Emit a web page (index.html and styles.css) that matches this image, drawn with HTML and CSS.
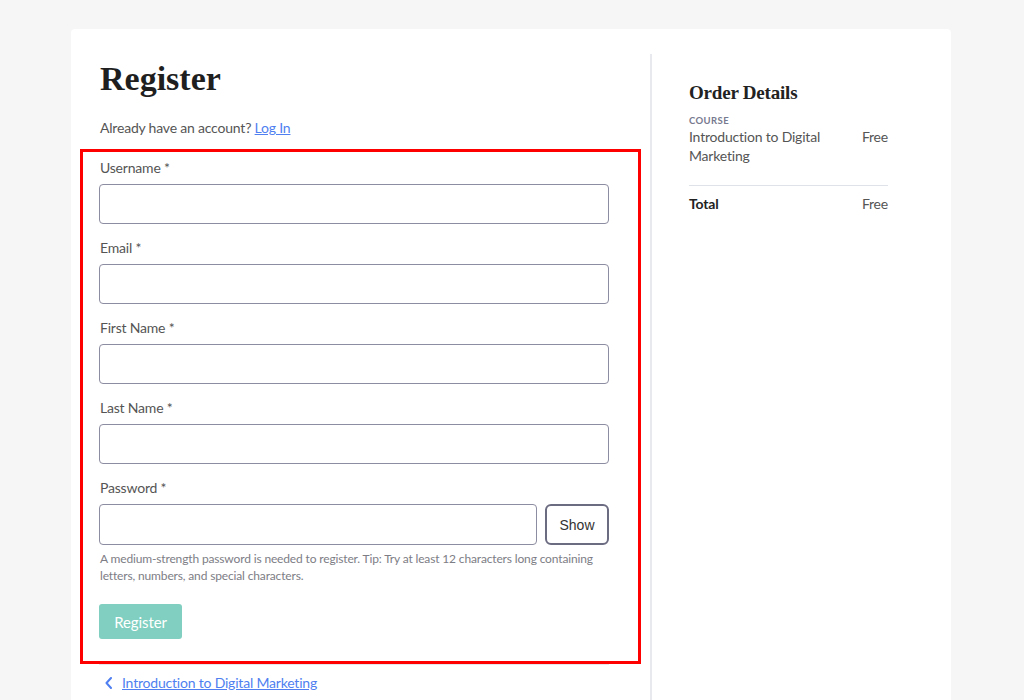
FILE: index.html
```html
<!DOCTYPE html>
<html lang="en">
<head>
<meta charset="utf-8">
<title>Register</title>
<link rel="stylesheet" href="styles.css">
</head>
<body>
<div class="card">
  <main class="main-col">
    <h1 class="title">Register</h1>
    <p class="login-line">Already have an account? <a href="#" class="link">Log In</a></p>
    <form class="reg-form">
      <div class="field">
        <label class="label">Username *</label>
        <input class="input" type="text">
      </div>
      <div class="field">
        <label class="label">Email *</label>
        <input class="input" type="text">
      </div>
      <div class="field">
        <label class="label">First Name *</label>
        <input class="input" type="text">
      </div>
      <div class="field">
        <label class="label">Last Name *</label>
        <input class="input" type="text">
      </div>
      <div class="field field-last">
        <label class="label">Password *</label>
        <div class="pw-row">
          <input class="input input-pw" type="password">
          <button type="button" class="show-btn">Show</button>
        </div>
      </div>
      <p class="hint">A medium-strength password is needed to register. Tip: Try at least 12 characters long containing letters, numbers, and special characters.</p>
      <button type="button" class="submit-btn">Register</button>
    </form>
    <nav class="back-nav">
      <svg class="chev" width="8" height="12" viewBox="0 0 8 12"><polyline points="6,1 1.5,6 6,11" fill="none" stroke="#4f7ff0" stroke-width="2" stroke-linecap="round" stroke-linejoin="round"/></svg>
      <a href="#" class="link">Introduction to Digital Marketing</a>
    </nav>
  </main>
  <aside class="side-col">
    <h2 class="side-title">Order Details</h2>
    <div class="caps">COURSE</div>
    <div class="order-row">
      <span class="course-name">Introduction to Digital Marketing</span>
      <span class="price">Free</span>
    </div>
    <div class="total-row">
      <span class="total-label">Total</span>
      <span class="price">Free</span>
    </div>
  </aside>
</div>
</body>
</html>
```

FILE: styles.css
```css
* { box-sizing: border-box; }
html, body { margin: 0; padding: 0; }
body {
  background: #f6f6f6;
  font-family: Lato, "Open Sans", sans-serif;
  color: #555;
  font-size: 14px;
  letter-spacing: -0.2px;
  height: 700px;
  overflow: hidden;
}
.card {
  margin: 29px 0 0 71px;
  width: 880px;
  min-height: 700px;
  background: #fff;
  border-radius: 4px;
  padding: 25px 0 0 28px;
  display: flex;
  align-items: stretch;
}
.main-col {
  width: 510px;
  margin-right: 41px;
}
.title {
  margin: 5px 0 0 1px;
  font-family: "Liberation Serif", "DejaVu Serif", serif;
  font-weight: bold;
  font-size: 34px;
  line-height: 40px;
  letter-spacing: 0;
  color: #1f1f1f;
}
.login-line {
  margin: 19px 0 0 1px;
  line-height: 20px;
}
.link {
  color: #4f7ff0;
  text-decoration: underline;
}
.reg-form {
  margin-top: 20px;
  position: relative;
}
.reg-form::after {
  content: "";
  position: absolute;
  top: -9px;
  left: -19px;
  right: -32px;
  bottom: -25px;
  border: 3px solid #ff0000;
  pointer-events: none;
}
.field { margin-bottom: 14px; }
.field-last { margin-bottom: 0; }
.label {
  display: block;
  line-height: 20px;
  margin: 0 0 6px 1px;
  color: #555;
}
.input {
  display: block;
  width: 100%;
  height: 40px;
  border: 1px solid #8c8ca2;
  border-radius: 4px;
  background: #fff;
  padding: 0 10px;
  font: inherit;
}
.pw-row {
  display: flex;
  gap: 8px;
}
.input-pw {
  flex: 1;
  height: 41px;
}
.show-btn {
  width: 64px;
  height: 41px;
  border: 2px solid #6b6b82;
  border-radius: 6px;
  background: #fff;
  font-family: "Liberation Sans", Arial, sans-serif;
  font-size: 14px;
  letter-spacing: 0;
  color: #333;
  padding: 0;
}
.hint {
  margin: 5px 0 0 1px;
  font-size: 12px;
  letter-spacing: -0.15px;
  line-height: 17px;
  color: #7d7d85;
}
.submit-btn {
  display: block;
  margin-top: 20px;
  width: 83px;
  height: 35px;
  border: none;
  border-radius: 3px;
  background: #80cfc0;
  color: #fff;
  font-family: Lato, sans-serif;
  font-size: 15px;
  letter-spacing: -0.1px;
  padding: 0;
}
.back-nav {
  margin-top: 25px;
  border-top: 1px solid #e6e6ec;
  padding: 8px 0 0 6px;
  display: flex;
  align-items: center;
  gap: 9px;
  line-height: 20px;
}
.chev { display: block; }
.side-col {
  border-left: 2px solid #e8e8ef;
  padding-left: 37px;
  width: 238px;
}
.side-title {
  margin: 27px 0 0;
  font-family: "Liberation Serif", "DejaVu Serif", serif;
  font-weight: bold;
  font-size: 19px;
  line-height: 24px;
  letter-spacing: -0.2px;
  color: #222;
}
.caps {
  margin-top: 9px;
  font-size: 9.5px;
  font-weight: bold;
  letter-spacing: 0.4px;
  line-height: 13px;
  color: #777a8e;
}
.order-row, .total-row {
  display: flex;
  justify-content: space-between;
  align-items: flex-start;
  width: 199px;
  line-height: 19px;
}
.order-row {
  padding-bottom: 20px;
  border-bottom: 1px solid #dfe2e9;
}
.course-name { width: 150px; }
.total-row { padding-top: 8px; }
.total-label { font-weight: bold; color: #222; }
.price { color: #555; }
```
